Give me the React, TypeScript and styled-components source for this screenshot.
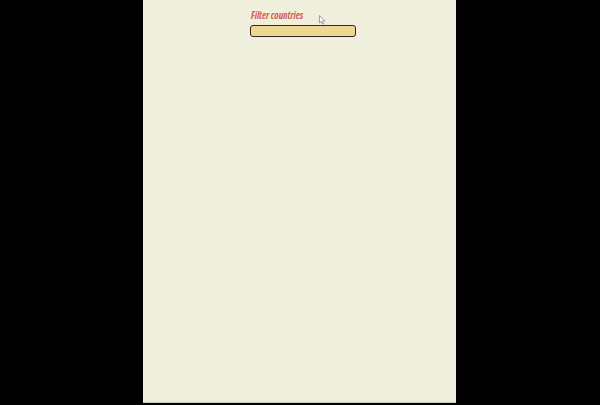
import React from "react";
import styled, { createGlobalStyle } from "styled-components";

const Global = createGlobalStyle`
  html, body { margin: 0; padding: 0; background: #000; }
  body { width: 600px; height: 405px; overflow: hidden; }
`;

const Stage = styled.div`
  display: flex;
  justify-content: flex-start;
  width: 600px;
  height: 405px;
  background: #000;
`;

const Panel = styled.main`
  position: relative;
  margin-left: 143px;
  width: 313px;
  height: 403px;
  background: #f0eedc;
  border-bottom: 1px solid #c8c6b4;
  box-sizing: border-box;
  padding: 10px 0 0 107px;
`;

const Field = styled.label`
  display: flex;
  flex-direction: column;
  gap: 3px;
  width: 106px;
`;

const Label = styled.span`
  font-family: "Open Sans", "Noto Sans", sans-serif;
  font-style: italic;
  font-weight: 700;
  font-stretch: 78%;
  font-size: 9.8px;
  line-height: 12px;
  color: #d85a4c;
  padding-left: 1px;
`;

const Input = styled.input`
  box-sizing: border-box;
  width: 106px;
  height: 12px;
  margin: 0;
  padding: 0 4px;
  border: 1px solid #2e2a20;
  border-radius: 3px;
  background: #ecd793;
  outline: none;
  font-size: 8px;
`;

const Cursor = styled.svg`
  position: absolute;
  left: 176px;
  top: 15px;
`;

export default function App() {
  return (
    <>
      <Global />
      <Stage>
        <Panel>
          <Field>
            <Label>Filter countries</Label>
            <Input type="text" />
          </Field>
          <Cursor width="7" height="10" viewBox="0 0 7 10">
            <path d="M0.5 0.5 L0.5 8 L2.3 6.4 L3.6 9.2 L4.6 8.7 L3.4 6 L5.8 6 Z" fill="#fff" stroke="#8a8a8a" strokeWidth="0.8" />
          </Cursor>
        </Panel>
      </Stage>
    </>
  );
}
